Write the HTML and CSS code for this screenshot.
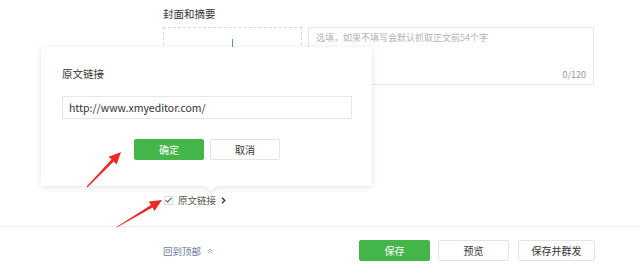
FILE: index.html
```html
<!DOCTYPE html>
<html lang="zh">
<head>
<meta charset="utf-8">
<link rel="stylesheet" href="styles.css">
</head>
<body>
<div class="page">
  <div class="content">
    <div class="section-title">封面和摘要</div>
    <div class="cover-row">
      <div class="cover-box"><span class="plus-line"></span></div>
      <div class="digest">
        <div class="placeholder">选填，如果不填写会默认抓取正文前54个字</div>
        <div class="counter">0/120</div>
      </div>
    </div>
    <div class="check-row">
      <span class="checkbox">
        <svg width="7" height="6" viewBox="0 0 7 6"><path d="M0.6 3.2 L2.6 5 L6.4 0.8" fill="none" stroke="#555" stroke-width="1.1"/></svg>
      </span>
      <span class="check-label">原文链接</span>
      <svg class="chev" width="5" height="7" viewBox="0 0 5 7"><path d="M1 0.8 L3.8 3.5 L1 6.2" fill="none" stroke="#333" stroke-width="1.3"/></svg>
    </div>
  </div>
  <div class="footer">
    <div class="back-top">回到顶部
      <svg class="dchev" width="6" height="6" viewBox="0 0 6 6"><path d="M0.8 3 L3 1 L5.2 3 M0.8 5.3 L3 3.3 L5.2 5.3" fill="none" stroke="#9aa3b8" stroke-width="0.9"/></svg>
    </div>
    <div class="actions">
      <button class="btn btn-primary btn-save">保存</button>
      <button class="btn btn-preview">预览</button>
      <button class="btn btn-mass">保存并群发</button>
    </div>
  </div>

  <div class="popup">
    <div class="popup-title">原文链接</div>
    <div class="popup-input">http://www.xmyeditor.com/</div>
    <div class="popup-buttons">
      <button class="btn btn-primary btn-small">确定</button>
      <button class="btn btn-small">取消</button>
    </div>
    <span class="popup-arrow"></span>
  </div>

  <svg class="arrows" width="640" height="274" viewBox="0 0 640 274">
    <polygon fill="#ee2a24" points="86.6,186.6 111.5,159.6 108.6,156.7 121,152 116.6,164.5 113.7,161.6 87.4,187.4"/>
    <polygon fill="#ee2a24" points="116.8,226.7 150.9,204.9 148.9,201.5 162,200 154.5,210.9 152.5,207.5 117.2,227.3"/>
  </svg>
</div>
</body>
</html>
```

FILE: styles.css
```css
* { box-sizing: border-box; }
html, body { margin: 0; padding: 0; background: #fff; }
.page {
  position: relative;
  width: 640px;
  height: 274px;
  overflow: hidden;
  font-family: "Noto Sans CJK SC", "Microsoft YaHei", sans-serif;
  color: #333;
}
.content {
  height: 226px;
  padding: 8px 46px 0 163px;
}
.section-title {
  font-size: 10.5px;
  line-height: 12px;
  color: #333;
}
.cover-row {
  display: flex;
  gap: 6px;
  margin-top: 7px;
}
.cover-box {
  width: 139px;
  height: 58px;
  border: 1px dashed #d6d7d9;
  position: relative;
}
.plus-line {
  position: absolute;
  left: 68px;
  top: 11px;
  width: 1px;
  height: 8px;
  background: #44b549;
}
.digest {
  flex: 1;
  height: 58px;
  border: 1px solid #e7e7eb;
  padding: 4px 7px 0 7px;
  display: flex;
  flex-direction: column;
  justify-content: space-between;
}
.placeholder {
  font-size: 9px;
  line-height: 12px;
  color: #b3b3b3;
}
.counter {
  font-size: 9px;
  line-height: 12px;
  color: #999;
  text-align: right;
  padding-bottom: 3px;
}
.check-row {
  display: flex;
  align-items: center;
  margin-top: 109px;
  height: 12px;
  padding-left: 1px;
}
.checkbox {
  width: 9px;
  height: 9px;
  border: 1px solid #dcdcdc;
  display: flex;
  align-items: center;
  justify-content: center;
}
.check-label {
  margin-left: 5px;
  font-size: 9.5px;
  line-height: 12px;
  color: #555;
}
.chev { margin-left: 5px; }
.footer {
  height: 48px;
  border-top: 1px solid #f0f0f0;
  display: flex;
  align-items: center;
  padding: 0 45px 0 163px;
}
.back-top {
  font-size: 9.5px;
  color: #6d7ba1;
  display: flex;
  align-items: center;
}
.dchev { margin-left: 6px; }
.actions {
  margin-left: auto;
  display: flex;
  gap: 8px;
}
.btn {
  font-family: inherit;
  font-size: 10px;
  height: 21px;
  width: 71px;
  padding: 0;
  border: 1px solid #e4e4e4;
  background: #fff;
  color: #333;
  border-radius: 2px;
}
.btn-primary {
  background: #44b549;
  border-color: #44b549;
  color: #fff;
}
.btn-mass { width: 77px; margin-left: 1px; }
.btn-small { width: 70px; height: 21px; }
.popup {
  position: absolute;
  left: 41px;
  top: 47px;
  width: 331px;
  height: 139px;
  background: #fff;
  box-shadow: 0 1px 6px rgba(0,0,0,0.12);
  padding: 21px 20px 0 21px;
}
.popup-title {
  font-size: 10.5px;
  line-height: 12px;
  color: #333;
}
.popup-input {
  margin-top: 16px;
  height: 23px;
  width: 290px;
  border: 1px solid #e7e7eb;
  font-size: 10.5px;
  line-height: 21px;
  padding-left: 6px;
  color: #333;
}
.popup-buttons {
  margin-top: 20px;
  display: flex;
  justify-content: center;
  gap: 6px;
}
.popup-arrow {
  position: absolute;
  left: 166px;
  bottom: -4px;
  width: 8px;
  height: 8px;
  background: #fff;
  transform: rotate(45deg);
  box-shadow: 2px 2px 3px rgba(0,0,0,0.06);
}
.arrows {
  position: absolute;
  left: 0;
  top: 0;
  pointer-events: none;
}
```
